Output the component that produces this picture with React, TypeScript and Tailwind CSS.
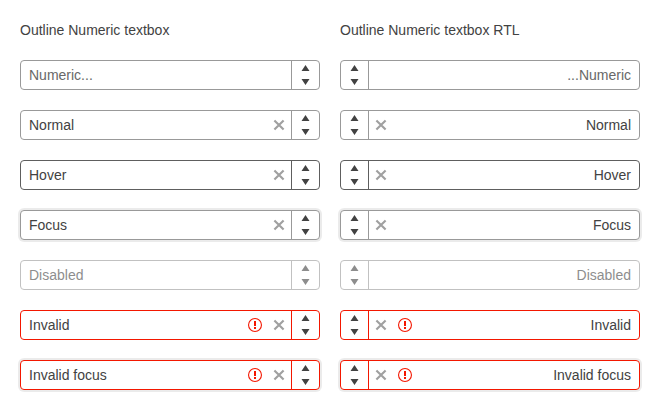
import clsx from 'clsx';

type State = 'placeholder' | 'normal' | 'hover' | 'focus' | 'disabled' | 'invalid' | 'invalidFocus';

const rows: { state: State; text: string }[] = [
  { state: 'placeholder', text: 'Numeric...' },
  { state: 'normal', text: 'Normal' },
  { state: 'hover', text: 'Hover' },
  { state: 'focus', text: 'Focus' },
  { state: 'disabled', text: 'Disabled' },
  { state: 'invalid', text: 'Invalid' },
  { state: 'invalidFocus', text: 'Invalid focus' },
];

const borders: Record<State, string> = {
  placeholder: 'border-[#999999]',
  normal: 'border-[#999999]',
  hover: 'border-[#5e5e5e]',
  focus: 'border-[#999999]',
  disabled: 'border-[#999999]',
  invalid: 'border-[#f31700]',
  invalidFocus: 'border-[#f31700]',
};

function Clear() {
  return (
    <svg className="size-4" viewBox="0 0 16 16" fill="none" stroke="#a0a0a0" strokeWidth="2.15">
      <path d="M3.4 3.4l9.2 9.2M12.6 3.4l-9.2 9.2" />
    </svg>
  );
}

function Warning() {
  return (
    <svg className="size-4" viewBox="0 0 16 16" fill="none">
      <circle cx="8" cy="8" r="6.45" stroke="#f31700" strokeWidth="1.1" />
      <path d="M7 4h2v5H7zM7 10h2v2H7z" fill="#f31700" />
    </svg>
  );
}

function Spinner() {
  return (
    <span className="flex w-7 flex-col items-center border-s border-inherit">
      <svg className="h-7 w-[27px]" viewBox="0 0 27 28" fill="#424242">
        <path d="M13.5 4L17.5 10H9.5zM9.5 18H17.5L13.5 24z" />
      </svg>
    </span>
  );
}

function NumericTextBox({ state, text }: { state: State; text: string }) {
  const invalid = state === 'invalid' || state === 'invalidFocus';
  const clearable = state !== 'placeholder' && state !== 'disabled';
  const focused = state === 'focus' || state === 'invalidFocus';
  return (
    <div
      className={clsx(
        'flex h-[30px] rounded border bg-white',
        borders[state],
        focused && 'shadow-[0_0_0_2px_rgba(0,0,0,0.08)]',
        state === 'disabled' && 'opacity-60',
      )}
    >
      <span className={clsx('flex-1 px-2 leading-7', state === 'placeholder' && 'text-[#686868]')}>{text}</span>
      <span className="flex items-center gap-2 pe-1">
        {invalid && <Warning />}
        {clearable && <Clear />}
      </span>
      <Spinner />
    </div>
  );
}

function Column({ title, rtl }: { title: string; rtl?: boolean }) {
  return (
    <section className="w-[300px]">
      <h2 className="mb-5 h-5 leading-5">{title}</h2>
      <div dir={rtl ? 'rtl' : 'ltr'} className="flex flex-col gap-5">
        {rows.map((row) => (
          <NumericTextBox key={row.state} {...row} />
        ))}
      </div>
    </section>
  );
}

export default function App() {
  return (
    <main className="flex h-[410px] w-[660px] gap-5 bg-white p-5 font-['Liberation_Sans',Arial,sans-serif] text-[14px] text-[#424242]">
      <Column title="Outline Numeric textbox" />
      <Column title="Outline Numeric textbox RTL" rtl />
    </main>
  );
}
